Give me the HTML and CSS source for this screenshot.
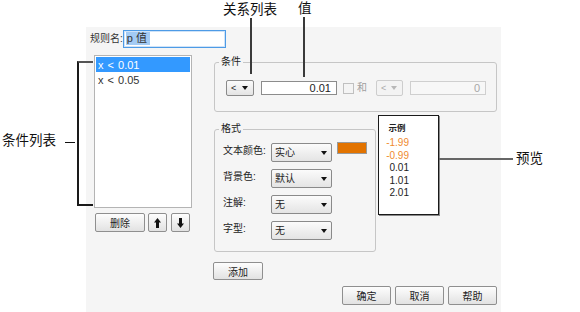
FILE: index.html
```html
<!DOCTYPE html>
<html lang="zh">
<head>
  <meta charset="UTF-8" />
  <title>条件格式</title>
  <link rel="stylesheet" href="styles.css">
</head>
<body>
  <div class="stage">

    <div class="dialog">
      <div class="rule-row">
        <span class="rule-label">规则名:</span>
        <div class="text-field focused"><span class="sel">p 值</span></div>
      </div>

      <div class="main">
        <div class="list-col">
          <div class="cond-list">
            <div class="cond-item active">x &lt; 0.01</div>
            <div class="cond-item">x &lt; 0.05</div>
          </div>
          <div class="list-btns">
            <button class="btn btn-del">删除</button>
            <button class="btn btn-icon">
              <svg width="7" height="10" viewBox="0 0 7 10"><path d="M3.5 0 L7 4.5 L5 4.5 L5 10 L2 10 L2 4.5 L0 4.5 Z" fill="#111"/></svg>
            </button>
            <button class="btn btn-icon btn-down">
              <svg width="7" height="10" viewBox="0 0 7 10"><path d="M3.5 10 L7 5.5 L5 5.5 L5 0 L2 0 L2 5.5 L0 5.5 Z" fill="#111"/></svg>
            </button>
          </div>
        </div>

        <div class="right-col">
          <div class="group cond-group">
            <span class="group-title">条件</span>
            <div class="cond-row">
              <div class="select op">&lt;<span class="caret"></span></div>
              <div class="num-field">0.01</div>
              <span class="check"></span>
              <span class="and">和</span>
              <div class="select op op2 disabled">&lt;<span class="caret"></span></div>
              <div class="num-field num2 disabled">0</div>
            </div>
          </div>

          <div class="format-row">
            <div class="group fmt-group">
              <span class="group-title">格式</span>
              <div class="fmt-line">
                <span class="fmt-label">文本颜色:</span>
                <div class="select wide">实心<span class="caret"></span></div>
                <span class="swatch"></span>
              </div>
              <div class="fmt-line">
                <span class="fmt-label">背景色:</span>
                <div class="select wide">默认<span class="caret"></span></div>
              </div>
              <div class="fmt-line">
                <span class="fmt-label">注解:</span>
                <div class="select wide">无<span class="caret"></span></div>
              </div>
              <div class="fmt-line">
                <span class="fmt-label">字型:</span>
                <div class="select wide">无<span class="caret"></span></div>
              </div>
            </div>

            <div class="preview">
              <div class="preview-col">
                <div class="preview-head">示例</div>
                <div class="pv hot">-1.99</div>
                <div class="pv hot">-0.99</div>
                <div class="pv">0.01</div>
                <div class="pv">1.01</div>
                <div class="pv">2.01</div>
              </div>
            </div>
          </div>

          <button class="btn btn-add">添加</button>

          <div class="dlg-btns">
            <button class="btn btn-dlg">确定</button>
            <button class="btn btn-dlg">取消</button>
            <button class="btn btn-dlg">帮助</button>
          </div>
        </div>
      </div>
    </div>

    <!-- callouts -->
    <span class="note note-rel">关系列表</span>
    <span class="lead lead-rel"></span>
    <span class="note note-val">值</span>
    <span class="lead lead-val"></span>

    <span class="note note-list">条件列表</span>
    <span class="dash"></span>
    <span class="bracket"></span>

    <span class="lead lead-prev"></span>
    <span class="note note-prev">预览</span>
  </div>
</body>
</html>
```

FILE: styles.css
```css
* {
  box-sizing: border-box;
}

body {
  margin: 0;
  background: #fff;
  font-family: "Liberation Sans", "Noto Sans CJK SC", sans-serif;
  color: #222;
}

.stage {
  position: relative;
  width: 580px;
  height: 312px;
  padding: 27px 0 0 86px;
  overflow: hidden;
}

.dialog {
  width: 415px;
  height: 285px;
  background: #f5f5f5;
  padding: 3px 0 0 4px;
  font-size: 10px;
}

/* rule name */
.rule-row {
  display: flex;
  align-items: center;
  height: 18px;
}

.rule-label {
  flex: 0 0 32px;
  white-space: nowrap;
  color: #333;
  line-height: 14px;
}

.text-field {
  position: relative;
  width: 103px;
  height: 18px;
  background: #fff;
  border: 1px solid #4d9be6;
  box-shadow: inset 0 0 0 1px #cfe3f8;
  padding: 1px 0 0 2px;
}

.text-field .sel {
  display: inline-block;
  background: #a3cbf4;
  color: #333;
  font-size: 11px;
  line-height: 13px;
  padding: 0 3px 0 1px;
}

.main {
  display: flex;
  margin-top: 7px;
}

/* condition list */
.list-col {
  margin-left: 4px;
  width: 98px;
}

.cond-list {
  height: 153px;
  background: #fff;
  border: 1px solid #b4b4b4;
  padding: 1px;
}

.cond-item {
  height: 15px;
  line-height: 17px;
  font-size: 11px;
  padding-left: 2px;
  color: #333;
  word-spacing: 1px;
}

.cond-item.active {
  background: #3399ff;
  color: #fff;
}

.list-btns {
  display: flex;
  gap: 3px;
  margin: 5px 0 0 1px;
}

.btn {
  font-family: inherit;
  font-size: 10px;
  color: #222;
  height: 19px;
  padding: 0;
  border: 1px solid #8f8f8f;
  border-radius: 2px;
  background: linear-gradient(#fdfdfd, #e2e2e2);
  display: flex;
  align-items: center;
  justify-content: center;
}

.btn-del {
  width: 50px;
}

.btn-icon {
  width: 19px;
}

.btn-down {
  margin-left: 1px;
}

/* right side */
.right-col {
  margin: 7px 0 0 22px;
  width: 283px;
}

.group {
  position: relative;
  border: 1px solid #c6c6c6;
  border-radius: 3px;
}

.group-title {
  position: absolute;
  top: -7px;
  left: 4px;
  padding: 0 2px;
  background: #f5f5f5;
  line-height: 12px;
  color: #222;
}

.cond-group {
  height: 50px;
  padding: 17px 0 0 11px;
}

.cond-row {
  display: flex;
  align-items: center;
  height: 16px;
}

.select {
  display: flex;
  align-items: center;
  justify-content: space-between;
  border: 1px solid #8a8a8a;
  border-radius: 2px;
  background: linear-gradient(#fbfbfb, #e4e4e4);
  line-height: 12px;
  color: #222;
}

.caret {
  width: 0;
  height: 0;
  border-left: 3px solid transparent;
  border-right: 3px solid transparent;
  border-top: 4px solid #111;
}

.select.op {
  width: 28px;
  height: 16px;
  padding: 0 5px 0 4px;
  font-size: 9px;
}

.select.disabled {
  border-color: #cdcdcd;
  background: #f3f3f3;
  color: #aaa;
}

.select.disabled .caret {
  border-top-color: #b8b8b8;
}

.op2 {
  margin-left: 9px;
  width: 27px !important;
}

.num-field {
  margin-left: 7px;
  width: 76px;
  height: 14px;
  background: #fff;
  border: 1px solid #8c8c8c;
  text-align: right;
  font-size: 11px;
  line-height: 12px;
  padding-right: 5px;
  color: #222;
}

.num-field.disabled {
  border-color: #cfcfcf;
  background: #f7f7f7;
  color: #a8a8a8;
}

.check {
  margin-left: 6px;
  width: 11px;
  height: 11px;
  border: 1px solid #c0c0c0;
  background: #f4f4f4;
}

.and {
  margin-left: 3px;
  color: #a0a0a0;
  line-height: 12px;
}

/* format */
.format-row {
  display: flex;
  align-items: flex-start;
}

.fmt-group {
  margin-top: 17px;
  width: 162px;
  height: 123px;
  padding: 13px 0 0 8px;
}

.fmt-line {
  display: flex;
  align-items: flex-start;
  height: 19px;
  margin-bottom: 7px;
}

.fmt-label {
  width: 48px;
  line-height: 14px;
  padding-top: 1px;
}

.select.wide {
  width: 61px;
  height: 19px;
  padding: 0 4px 0 3px;
}

.swatch {
  margin: -1px 0 0 5px;
  width: 30px;
  height: 12px;
  background: #e27300;
  border: 1px solid #9a9a9a;
}

.preview {
  margin: 3px 0 0 2px;
  width: 61px;
  height: 100px;
  background: #fff;
  border: 1px solid #1a1a1a;
  box-shadow: 1px 1px 0 #8a8a8a;
  padding: 6px 0 0 6px;
}

.preview-col {
  width: 24px;
}

.preview-head {
  text-align: center;
  font-size: 8.5px;
  font-weight: bold;
  line-height: 13px;
  margin-bottom: 2px;
}

.pv {
  text-align: right;
  font-size: 10px;
  line-height: 12.5px;
  color: #222;
}

.pv.hot {
  color: #ef8a2e;
}

.btn-add {
  margin-top: 10px;
  margin-left: -1px;
  width: 50px;
  height: 18px;
}

.dlg-btns {
  display: flex;
  justify-content: flex-end;
  gap: 4px;
  margin-top: 6px;
}

.btn-dlg {
  width: 49px;
  height: 19px;
}

/* callouts */
.note {
  position: absolute;
  font-size: 13.5px;
  line-height: 16px;
  color: #111;
}

.note-rel { left: 223px; top: 2px; }
.note-val { left: 298px; top: 1px; }
.note-list { left: 2px; top: 133px; }
.note-prev { left: 516px; top: 151px; }

.lead {
  position: absolute;
  background: #3a3a3a;
}

.lead-rel { left: 250px; top: 18px; width: 2px; height: 56px; }
.lead-val { left: 303px; top: 17px; width: 2px; height: 60px; }
.lead-prev { left: 439px; top: 158px; width: 74px; height: 2px; background: #666; }

.dash {
  position: absolute;
  left: 65px;
  top: 142px;
  width: 10px;
  height: 1px;
  background: #111;
}

.bracket {
  position: absolute;
  left: 77px;
  top: 61px;
  width: 16px;
  height: 145px;
  border: 2px solid #1a1a1a;
  border-right: none;
  border-top-color: #555;
}
```
